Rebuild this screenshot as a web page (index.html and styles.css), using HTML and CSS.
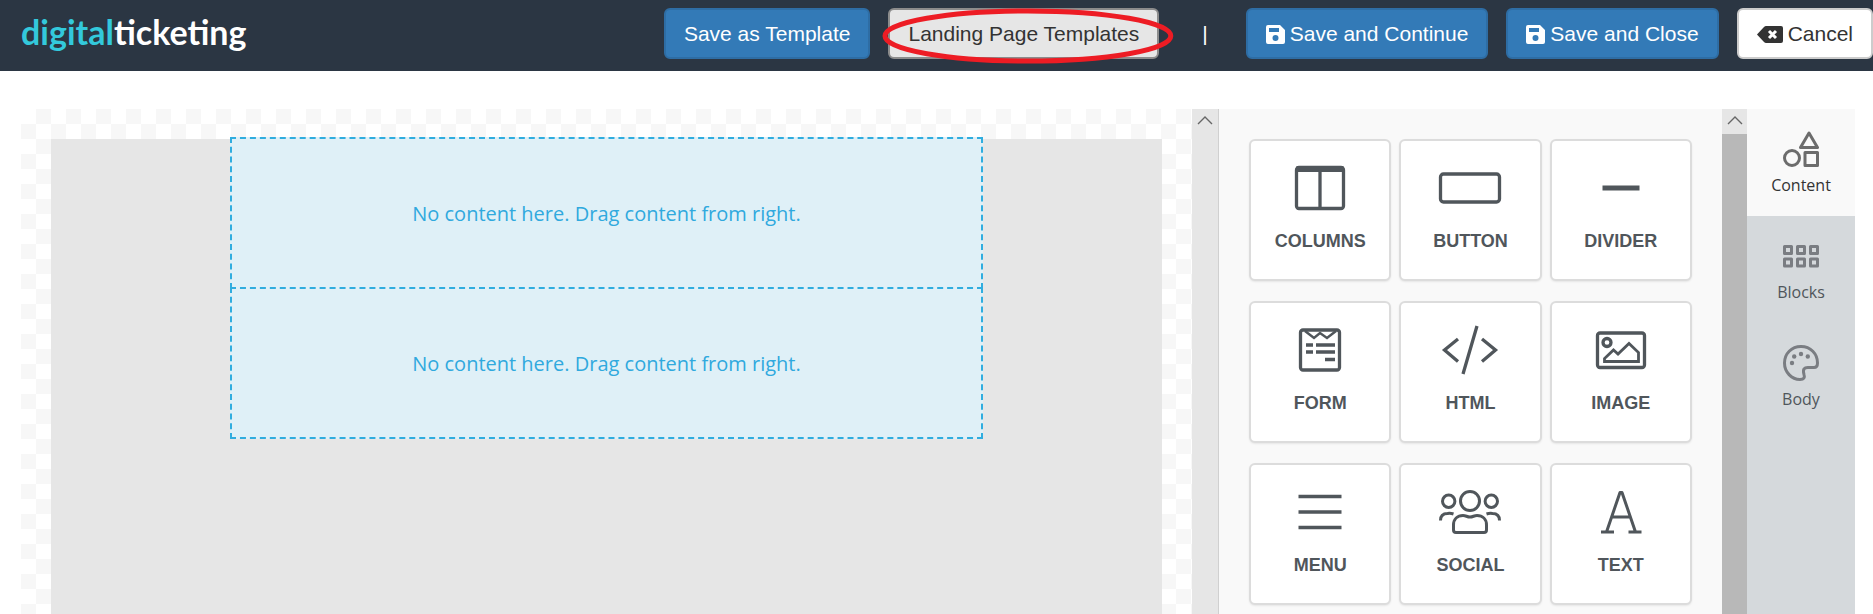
FILE: index.html
```html
<!DOCTYPE html>
<html lang="en">
<head>
    <meta charset="UTF-8">
    <meta name="viewport" content="width=device-width, initial-scale=1.0">
    <title>Landing Page Editor</title>
    <link rel="stylesheet" href="styles.css">
</head>
<body>
    <header class="navbar">
        <a class="logo" href="#"><span class="logo-accent">digital</span>ticketing</a>
        <div class="actions">
            <button class="btn btn-primary" type="button">Save as Template</button>
            <div class="highlight">
                <button class="btn btn-active" type="button">Landing Page Templates</button>
                <svg class="highlight-ring" viewBox="0 0 294 56" preserveAspectRatio="none" aria-hidden="true">
                    <ellipse cx="147" cy="28" rx="144" ry="25"/>
                </svg>
            </div>
            <span class="separator">|</span>
            <button class="btn btn-primary" type="button">
                <svg class="icon-save" viewBox="0 0 19 19" aria-hidden="true">
                    <path fill-rule="evenodd" d="M2 0h12l5 5v12a2 2 0 0 1-2 2H2a2 2 0 0 1-2-2V2a2 2 0 0 1 2-2zM3 3v4h10V3zM9.500 10a3 3 0 1 0 0 6 3 3 0 0 0 0-6z"/>
                </svg>
                Save and Continue
            </button>
            <button class="btn btn-primary" type="button">
                <svg class="icon-save" viewBox="0 0 19 19" aria-hidden="true">
                    <path fill-rule="evenodd" d="M2 0h12l5 5v12a2 2 0 0 1-2 2H2a2 2 0 0 1-2-2V2a2 2 0 0 1 2-2zM3 3v4h10V3zM9.500 10a3 3 0 1 0 0 6 3 3 0 0 0 0-6z"/>
                </svg>
                Save and Close
            </button>
            <button class="btn btn-default" type="button">
                <svg class="icon-cancel" viewBox="0 0 26 17" aria-hidden="true">
                    <path d="M0 8.500 7 1q1-1 2-1h15a2 2 0 0 1 2 2v13a2 2 0 0 1-2 2H9q-1 0-2-1z"/>
                    <path class="icon-cross" d="M12 5l7 7M19 5l-7 7"/>
                </svg>
                Cancel
            </button>
        </div>
    </header>

    <main class="editor">
        <section class="canvas">
            <div class="page">
                <div class="dropzone">
                    <div class="drop-row">No content here. Drag content from right.</div>
                    <div class="drop-row">No content here. Drag content from right.</div>
                </div>
            </div>
        </section>
        <div class="scrollbar scrollbar-canvas">
            <button class="scroll-up" type="button" aria-label="Scroll up">
                <svg viewBox="0 0 16 10" aria-hidden="true"><path d="M1 9l7-7 7 7"/></svg>
            </button>
        </div>

        <section class="tools">
            <button class="tool" type="button">
                <svg class="tool-icon" viewBox="0 0 64 50" aria-hidden="true">
                    <rect x="8.500" y="4.500" width="47" height="41" rx="2.500"/>
                    <path d="M8.500 6h47" stroke-width="6"/>
                    <path d="M32 6v39"/>
                </svg>
                Columns
            </button>
            <button class="tool" type="button">
                <svg class="tool-icon" viewBox="0 0 64 50" aria-hidden="true">
                    <rect x="2.500" y="11" width="59" height="28" rx="3"/>
                </svg>
                Button
            </button>
            <button class="tool" type="button">
                <svg class="tool-icon" viewBox="0 0 64 50" aria-hidden="true">
                    <path d="M13.500 25h37" stroke-width="5"/>
                </svg>
                Divider
            </button>
            <button class="tool" type="button">
                <svg class="tool-icon" viewBox="0 0 64 50" aria-hidden="true">
                    <rect x="12.500" y="5" width="39" height="40" rx="2.500"/>
                    <path d="M17 6l9 7 6-5 7 5 9-7" stroke-width="2.500"/>
                    <path d="M18 20h7M28 20h19M18 27h7M28 27h19M37 34.500h10"/>
                </svg>
                Form
            </button>
            <button class="tool" type="button">
                <svg class="tool-icon" viewBox="0 0 64 50" aria-hidden="true">
                    <path d="M20 14L6.500 25 20 36.500M39 1L25 49M44 14l13.500 11L44 36.500"/>
                </svg>
                HTML
            </button>
            <button class="tool" type="button">
                <svg class="tool-icon" viewBox="0 0 64 50" aria-hidden="true">
                    <rect x="8.500" y="8" width="47" height="34.500" rx="2.500"/>
                    <circle cx="18" cy="17.500" r="4"/>
                    <path d="M15.500 36.500v-3l9-8.500 4.500 4 11-10.500 9.500 9v9z" stroke-width="2.800"/>
                </svg>
                Image
            </button>
            <button class="tool" type="button">
                <svg class="tool-icon" viewBox="0 0 64 50" aria-hidden="true">
                    <path d="M10.500 9.500h43M10.500 25h43M10.500 40.500h43"/>
                </svg>
                Menu
            </button>
            <button class="tool" type="button">
                <svg class="tool-icon tool-icon-thin" viewBox="0 0 64 50" aria-hidden="true">
                    <circle cx="10.700" cy="14.300" r="6.200"/>
                    <circle cx="53.300" cy="14.300" r="6.200"/>
                    <circle cx="32" cy="14" r="9.500"/>
                    <path d="M2.500 33.500c0-5 3-7 7-7q3-.5 6 .5M61.500 33.500c0-5-3-7-7-7q-3-.5-6 .5"/>
                    <path d="M18 45.500q-2.500 0-2.500-2.500v-5c0-6 4-9.500 9.500-9.500 3 0 4 1.500 7 1.500s4-1.500 7-1.500c5.500 0 9.500 3.500 9.500 9.500v5q0 2.500-2.500 2.500z"/>
                </svg>
                Social
            </button>
            <button class="tool" type="button">
                <svg class="tool-icon tool-icon-thin" viewBox="0 0 64 50" aria-hidden="true">
                    <path d="M17.500 45L31 5.500h2L46.500 45M22.500 30h19M12 45h13M39.500 45h13"/>
                </svg>
                Text
            </button>
        </section>
        <div class="scrollbar">
            <button class="scroll-up" type="button" aria-label="Scroll up">
                <svg viewBox="0 0 16 10" aria-hidden="true"><path d="M1 9l7-7 7 7"/></svg>
            </button>
            <div class="scroll-thumb"></div>
        </div>

        <nav class="tabs">
            <a class="tab tab-active" href="#">
                <svg class="tab-icon" viewBox="0 0 36 36" aria-hidden="true">
                    <path d="M26 2l8.500 14.500h-17z"/>
                    <circle cx="9" cy="27" r="7.500"/>
                    <rect x="22" y="21.500" width="12.500" height="13"/>
                </svg>
                Content
            </a>
            <a class="tab" href="#">
                <svg class="tab-icon" viewBox="0 0 36 36" aria-hidden="true">
                    <path d="M1.500 8.500h7v7h-7zM14.500 8.500h7v7h-7zM27.500 8.500h7v7h-7zM1.500 21h7v7h-7zM14.500 21h7v7h-7zM27.500 21h7v7h-7z"/>
                </svg>
                Blocks
            </a>
            <a class="tab" href="#">
                <svg class="tab-icon" viewBox="0 0 36 36" aria-hidden="true">
                    <path d="M18 1.500C8.500 1.500 1.500 8.500 1.500 18c0 9 7 16.500 15.500 16.500 4 0 5-2 4-5-1.500-5 0-7.500 5-7h5c2.500 0 3.500-1.500 3.500-4.500C34.500 8.500 27.500 1.500 18 1.500z"/>
                    <g class="tab-icon-dots">
                        <circle cx="9" cy="18" r="2.200"/>
                        <circle cx="11.200" cy="11.500" r="2.200"/>
                        <circle cx="18" cy="9" r="2.200"/>
                        <circle cx="24.800" cy="11.500" r="2.200"/>
                    </g>
                </svg>
                Body
            </a>
        </nav>
    </main>
</body>
</html>
```

FILE: styles.css
```css
* {
    box-sizing: border-box;
}
body {
    font-family: "Liberation Sans", Arial, sans-serif;
    background-color: white;
    margin: 0;
    height: 100vh;
    overflow: hidden;
    display: flex;
    flex-direction: column;
}
button {
    font-family: inherit;
    cursor: pointer;
}

/* Top bar */
.navbar {
    background-color: #2b3643;
    padding: 8px 0 12px 21px;
    display: flex;
    justify-content: space-between;
    align-items: flex-start;
}
.logo {
    font-family: Lato, sans-serif;
    font-size: 34px;
    line-height: 48px;
    font-weight: bold;
    color: white;
    text-decoration: none;
}
.logo-accent {
    color: #33c9dc;
}
.actions {
    display: flex;
    align-items: center;
    gap: 18px;
}
.btn {
    display: flex;
    align-items: center;
    gap: 5px;
    border: 2px solid;
    border-radius: 6px;
    padding: 10px 18px 9px;
    font-size: 21px;
    line-height: 28px;
    white-space: nowrap;
}
.btn svg {
    fill: currentColor;
}
.btn-primary {
    background-color: #337ab7;
    border-color: #2e6da4;
    color: white;
}
.btn-default {
    background-color: white;
    border-color: #ccc;
    color: #333;
}
.btn-active {
    background-color: #e6e6e6;
    border-color: #8c8c8c;
    color: #333;
}
.icon-save {
    width: 19px;
    height: 19px;
}
.icon-cancel {
    width: 26px;
    height: 17px;
}
.icon-cancel .icon-cross {
    stroke: white;
    stroke-width: 3;
}
.separator {
    color: white;
    font-size: 21px;
    padding: 0 20px 0 25px;
}
.highlight {
    position: relative;
}
.highlight-ring {
    position: absolute;
    left: -6px;
    top: 0;
    width: calc(100% + 21px);
    height: 56px;
    fill: none;
    stroke: #ed1c24;
    stroke-width: 5;
    pointer-events: none;
}

/* Editor */
.editor {
    flex: 1;
    min-height: 0;
    display: flex;
    padding: 38px 18px 0 21px;
}
.canvas {
    flex: 1;
    display: flex;
    padding: 30px 30px 0;
    background: repeating-conic-gradient(#f7f7f7 0 25%, white 0 50%) 0 0 / 30px 30px;
}
.page {
    flex: 1;
    background-color: #e6e6e6;
}
.dropzone {
    max-width: 753px;
    margin: -2px auto 0;
}
.drop-row {
    height: 152px;
    display: flex;
    align-items: center;
    justify-content: center;
    background-color: #dff0f7;
    border: 2px dashed #30addf;
    color: #30a9de;
    font-family: "Open Sans", sans-serif;
    font-size: 20px;
}
.drop-row + .drop-row {
    margin-top: -2px;
}

.scrollbar {
    width: 25px;
    display: flex;
    flex-direction: column;
    background-color: #e6e6e6;
}
.scrollbar-canvas {
    width: 27px;
    border-right: 1px solid #d0d0d0;
}
.scroll-up {
    height: 25px;
    padding: 0 0 3px;
    border: 0;
    background: none;
}
.scroll-up svg {
    display: block;
    width: 16px;
    height: 10px;
    margin: 0 auto;
    fill: none;
    stroke: #666;
    stroke-width: 1.4;
}
.scroll-thumb {
    flex: 1;
    background-color: #b8b8b8;
}

/* Content tools */
.tools {
    width: 503px;
    padding: 30px;
    display: grid;
    grid-template-columns: repeat(3, 1fr);
    grid-auto-rows: 142px;
    gap: 20px 8px;
    background-color: #f9f9f9;
    overflow: hidden;
}
.tool {
    display: flex;
    flex-direction: column;
    align-items: center;
    gap: 16px;
    padding: 22px 0 0;
    background-color: white;
    border: 2px solid #dcdcdc;
    border-radius: 6px;
    box-shadow: 0 1px 2px rgba(0, 0, 0, 0.08);
    color: #50565b;
    font-size: 18px;
    font-weight: bold;
    line-height: 24px;
    text-transform: uppercase;
}
.tool-icon {
    width: 64px;
    height: 50px;
    fill: none;
    stroke: #50565b;
    stroke-width: 3.3;
}
.tool-icon-thin {
    stroke-width: 3;
    stroke-linejoin: round;
}

/* Side tabs */
.tabs {
    width: 108px;
    background-color: #d5d9dc;
}
.tab {
    height: 107px;
    padding-top: 22px;
    display: flex;
    flex-direction: column;
    align-items: center;
    gap: 6px;
    color: #50565b;
    font-family: "Open Sans", sans-serif;
    font-size: 16px;
    line-height: 24px;
    text-decoration: none;
}
.tab-icon {
    width: 36px;
    height: 36px;
    fill: none;
    stroke: #7a7d82;
    stroke-width: 3;
    stroke-linejoin: round;
}
.tab-icon-dots {
    fill: #7a7d82;
    stroke: none;
}
.tab-active {
    background-color: #f9f9f9;
    color: #333;
}
.tab-active .tab-icon {
    stroke: #6c6c6c;
}
```
